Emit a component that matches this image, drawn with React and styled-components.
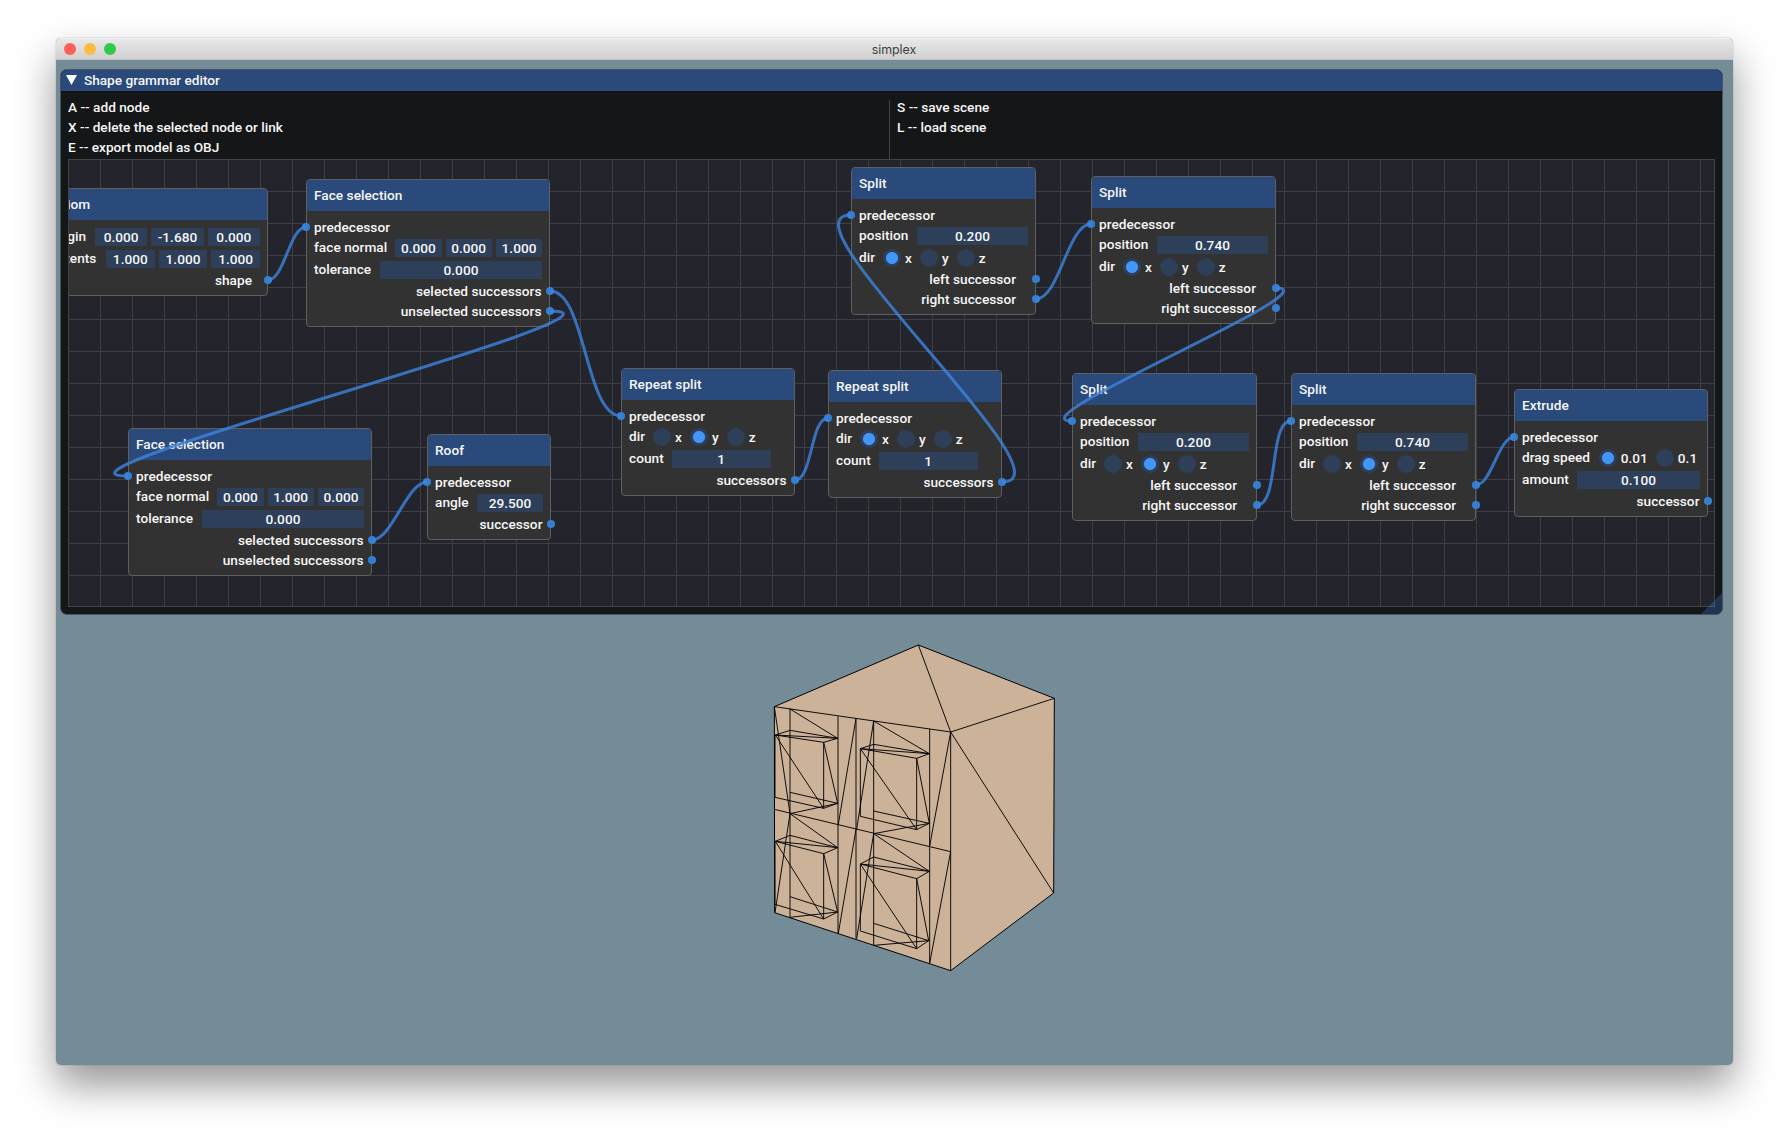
import React from "react";
import styled, { createGlobalStyle } from "styled-components";

const GlobalStyle = createGlobalStyle`
  html, body { margin: 0; padding: 0; background: #fff; }
  #root { height: 1139px; overflow: hidden; }
  * { box-sizing: border-box; }
`;

const Desktop = styled.div`
  height: 1139px;
  padding: 38px 56px 74px;
  background: #fff;
  font-family: Roboto, "Liberation Sans", sans-serif;
`;

const AppWindow = styled.div`
  display: flex;
  flex-direction: column;
  height: 1027px;
  border-radius: 5px;
  overflow: hidden;
  background: #748c98;
  box-shadow: 0 0 0 1px rgba(0, 0, 0, 0.06), 0 20px 40px rgba(0, 0, 0, 0.42);
`;

const TitleBar = styled.div`
  display: grid;
  grid-template-columns: 1fr auto 1fr;
  align-items: center;
  flex: none;
  height: 22px;
  padding: 0 9px 0 8px;
  background: linear-gradient(#e8e8e8, #d0d0d0);
  border-top: 1px solid #f1f1f1;
  border-bottom: 1px solid #c4c4c4;
`;

const Lights = styled.div`
  display: flex;
  gap: 8px;
`;

const Light = styled.span`
  width: 12px;
  height: 12px;
  border-radius: 50%;
  background: ${(p) => p.$color};
`;

const AppTitle = styled.div`
  padding-top: 2px;
  font: 400 12.4px/18px Inter, Roboto, sans-serif;
  color: #404040;
`;

const Viewport = styled.div`
  flex: 1;
  padding: 9px 10px 0 4px;
`;

const Panel = styled.section`
  height: 546px;
  display: flex;
  flex-direction: column;
  border: 1px solid #4c535c;
  border-radius: 7px;
  overflow: hidden;
  position: relative;
  background: #151617;
  color: #f6f6f6;
  font-size: 13.65px;
  font-weight: 500;
  line-height: 16px;
  white-space: pre;
`;

const PanelHeader = styled.header`
  display: flex;
  align-items: flex-start;
  gap: 6.5px;
  flex: none;
  height: 22px;
  padding: 2px 6px 0 5.4px;
  background: #294a7a;
  border-bottom: 1px solid #12100c;
`;

const Caret = styled.svg`
  margin-top: 3px;
`;

const PanelBody = styled.div`
  padding: 8px 7px 0;
`;

const Help = styled.div`
  display: grid;
  grid-template-columns: 821px 1fr;
  height: 59px;
`;

const HelpColumn = styled.div`
  display: flex;
  flex-direction: column;
  gap: 4px;
  padding-left: ${(p) => (p.$divided ? 7 : 0)}px;
  border-left: ${(p) => (p.$divided ? "1px solid #42434a" : "none")};

  span:first-child {
    margin-top: -1px;
  }
`;

const Canvas = styled.div`
  position: relative;
  height: 448px;
  overflow: hidden;
  border: 1px solid #42434a;
  background-color: #24242c;
  background-image: linear-gradient(90deg, #3e3e45 1px, transparent 1px),
    linear-gradient(#3e3e45 1px, transparent 1px);
  background-size: 32px 32px;
  background-position: -1px -1px;
`;

const Grip = styled.svg`
  position: absolute;
  right: 0;
  bottom: 0;
`;

const NodeBox = styled.div`
  position: absolute;
  left: ${(p) => p.$x - 69}px;
  top: ${(p) => p.$y - 160}px;
  width: ${(p) => p.$w}px;
  border: 1px solid #5f5f5f;
  border-radius: 4px;
  background: #323232;
  letter-spacing: 0.03px;
`;

const NodeTitle = styled.div`
  height: 31px;
  padding: 7px 7px 8px;
  border-radius: 3px 3px 0 0;
  background: #294a7a;
`;

const NodeBody = styled.div`
  display: flex;
  flex-direction: column;
  gap: 4px;
  padding: 8px 7px 7px;
`;

const Row = styled.div`
  position: relative;
  display: flex;
  gap: 8px;
  height: ${(p) => (p.$field ? 18 : 16)}px;
  justify-content: ${(p) => (p.$out ? "flex-end" : "flex-start")};
  padding-right: ${(p) => p.$inset || 0}px;
`;

const Pin = styled.span`
  position: absolute;
  top: 4px;
  ${(p) => (p.$side === "in" ? "left: -12px;" : "right: -12px;")}
  width: 8px;
  height: 8px;
  border-radius: 50%;
  background: #357fd0;
`;

const Fields = styled.div`
  display: flex;
  flex: none;
  gap: 4px;
  width: ${(p) => p.$w}px;
  ${(p) => (p.$trailing ? "margin-left: auto;" : "")}
`;

const Field = styled.div`
  flex: 1;
  height: 18px;
  padding-top: 1px;
  text-align: center;
  background: #2d3f59;
`;

const Radio = styled.div`
  display: flex;
  gap: 4px;
`;

const RadioDot = styled.span`
  width: 18px;
  height: 18px;
  border-radius: 50%;
  background: ${(p) =>
    p.$on ? "radial-gradient(circle, #4296fa 5.6px, #2d3f59 6.4px)" : "#2d3f59"};
`;

const RadioText = styled.span`
  padding-top: 1px;
`;

const RadioLabel = styled.span`
  margin-right: ${(p) => (p.$wide ? 0.6 : 0)}px;
`;

const Links = styled.svg`
  position: absolute;
  left: -1px;
  top: -1px;
  pointer-events: none;
`;

const Model = styled.svg`
  display: block;
  margin: 15px 0 0 700px;
`;

const input = { kind: "in", label: "predecessor" };
const out = (label, inset = 0.5) => ({ kind: "out", label, inset });
const drag = (label, values, w) => ({ kind: "drag", label, values, w });
const radio = (label, options, on) => ({ kind: "radio", label, options, on });
const axes = ["x", "y", "z"];

const splitRows = (position, dir) => [
  input,
  drag("position", [position], 111),
  radio("dir", axes, dir),
  out("left successor", 12),
  out("right successor", 12),
];

const faceRows = (normal) => [
  input,
  drag("face normal", normal, 147),
  drag("tolerance", ["0.000"], 162),
  out("selected successors"),
  out("unselected successors"),
];

const repeatRows = (dir) => [
  input,
  radio("dir", axes, dir),
  drag("count", ["1"], 99),
  out("successors"),
];

const nodes = [
  {
    title: "Axiom", x: 43, y: 188, w: 225,
    rows: [
      drag("origin", ["0.000", "-1.680", "0.000"], 165),
      drag("extents", ["1.000", "1.000", "1.000"], 154),
      out("shape", 8),
    ],
  },
  { title: "Face selection", x: 306, y: 179, w: 244, rows: faceRows(["0.000", "0.000", "1.000"]) },
  { title: "Split", x: 851, y: 167, w: 185, rows: splitRows("0.200", 0) },
  { title: "Split", x: 1091, y: 176, w: 185, rows: splitRows("0.740", 0) },
  { title: "Repeat split", x: 621, y: 368, w: 174, rows: repeatRows(1) },
  { title: "Repeat split", x: 828, y: 370, w: 174, rows: repeatRows(0) },
  { title: "Face selection", x: 128, y: 428, w: 244, rows: faceRows(["0.000", "1.000", "0.000"]) },
  {
    title: "Roof", x: 427, y: 434, w: 124,
    rows: [input, drag("angle", ["29.500"], 66), out("successor")],
  },
  { title: "Split", x: 1072, y: 373, w: 185, rows: splitRows("0.200", 1) },
  { title: "Split", x: 1291, y: 373, w: 185, rows: splitRows("0.740", 1) },
  {
    title: "Extrude", x: 1514, y: 389, w: 194,
    rows: [
      input,
      radio("drag speed", ["0.01", "0.1"], 0),
      drag("amount", ["0.100"], 123),
      out("successor"),
    ],
  },
];

const links = [
  [268, 280, 306, 227],
  [550, 291, 621, 416],
  [550, 311, 128, 476],
  [372, 540, 427, 482],
  [795, 480, 828, 418],
  [1002, 482, 851, 215],
  [1036, 299, 1091, 224],
  [1276, 288, 1072, 421],
  [1257, 505, 1291, 421],
  [1476, 485, 1514, 437],
];

function linkPath([x1, y1, x2, y2]) {
  const d = Math.hypot(x2 - x1, y2 - y1) * 0.25;
  return `M${x1} ${y1}C${x1 + d} ${y1} ${x2 - d} ${y2} ${x2} ${y2}`;
}

function NodeRow({ row }) {
  if (row.kind === "in") {
    return (
      <Row>
        <Pin $side="in" />
        <span>{row.label}</span>
      </Row>
    );
  }
  if (row.kind === "out") {
    return (
      <Row $out $inset={row.inset}>
        <span>{row.label}</span>
        <Pin $side="out" />
      </Row>
    );
  }
  if (row.kind === "drag") {
    return (
      <Row $field>
        <span>{row.label}</span>
        <Fields $w={row.w} $trailing={row.label !== "count"}>
          {row.values.map((v, i) => (
            <Field key={i}>{v}</Field>
          ))}
        </Fields>
      </Row>
    );
  }
  return (
    <Row $field>
      <RadioLabel $wide={row.label.length > 3}>{row.label}</RadioLabel>
      {row.options.map((o, i) => (
        <Radio key={o}>
          <RadioDot $on={i === row.on} />
          <RadioText>{o}</RadioText>
        </Radio>
      ))}
    </Row>
  );
}

function House() {
  return (
    <Model width="310" height="350" viewBox="0 0 930 1050">
      <path
        fill="#ccb299"
        stroke="#000"
        strokeWidth="3"
        strokeLinejoin="round"
        d="M475 45L883 205L881 789L572 1022L44 848L43 230Z"
      />
      <path
        fill="none"
        stroke="#000"
        strokeWidth="2.8"
        strokeLinejoin="round"
        d="M475 45L572 306M43 230L572 306L883 205M572 306V1022M572 306L881 789M43 538L572 665
        M90 237V862M234 259V910M288 265V926M341 273V946M509 297V1000
        M43 230L90 551L45 848M288 265L235 583M288 598L235 910M341 273L290 598M341 611L290 926
        M572 306L509 648M572 665L509 1000
        M90 237L233 325M46 315L90 301L233 325L191 337ZM46 315L233 325M46 315L191 535V337L233 520L191 535L45 502V315M90 487L233 520L90 551
        M341 273L508 371M301 356L341 343L508 371L470 385ZM301 356L508 371M301 356L470 599V385L508 580L470 599L301 559V356M341 543L508 580L341 611
        M90 551L233 653M46 634L90 616L233 653L191 671ZM46 634L233 653M46 634L191 867V671L233 846L191 867L45 823V634M90 800L233 846L90 862
        M341 611L508 724M301 702L341 681L508 724L470 746ZM301 702L508 724M301 702L470 956V746L506 932L470 956L301 903V702M341 880L506 932L341 946"
      />
    </Model>
  );
}

export default function App() {
  return (
    <>
      <GlobalStyle />
      <Desktop>
        <AppWindow>
          <TitleBar>
            <Lights>
              <Light $color="#fc605b" />
              <Light $color="#fdbc40" />
              <Light $color="#34c84a" />
            </Lights>
            <AppTitle>simplex</AppTitle>
            <span />
          </TitleBar>
          <Viewport>
            <Panel>
              <PanelHeader>
                <Caret width="11" height="10" viewBox="0 0 11 10">
                  <path d="M0 0H11L5.5 10Z" fill="#fff" />
                </Caret>
                <span>Shape grammar editor</span>
              </PanelHeader>
              <PanelBody>
                <Help>
                  <HelpColumn>
                    <span>A -- add node</span>
                    <span>X -- delete the selected node or link</span>
                    <span>E -- export model as OBJ</span>
                  </HelpColumn>
                  <HelpColumn $divided>
                    <span>S -- save scene</span>
                    <span>L -- load scene</span>
                  </HelpColumn>
                </Help>
                <Canvas>
                  {nodes.map((n, i) => (
                    <NodeBox key={i} $x={n.x} $y={n.y} $w={n.w}>
                      <NodeTitle>{n.title}</NodeTitle>
                      <NodeBody>
                        {n.rows.map((r, j) => (
                          <NodeRow key={j} row={r} />
                        ))}
                      </NodeBody>
                    </NodeBox>
                  ))}
                  <Links width="1647" height="448" viewBox="68 159 1647 448">
                    {links.map((l, i) => (
                      <path
                        key={i}
                        d={linkPath(l)}
                        fill="none"
                        stroke="#3d85e0"
                        strokeOpacity="0.8"
                        strokeWidth="3"
                      />
                    ))}
                  </Links>
                </Canvas>
              </PanelBody>
              <Grip width="21" height="21" viewBox="0 0 21 21">
                <path d="M21 0V15Q21 21 15 21H0Z" fill="#4296fa" fillOpacity="0.25" />
              </Grip>
            </Panel>
            <House />
          </Viewport>
        </AppWindow>
      </Desktop>
    </>
  );
}
